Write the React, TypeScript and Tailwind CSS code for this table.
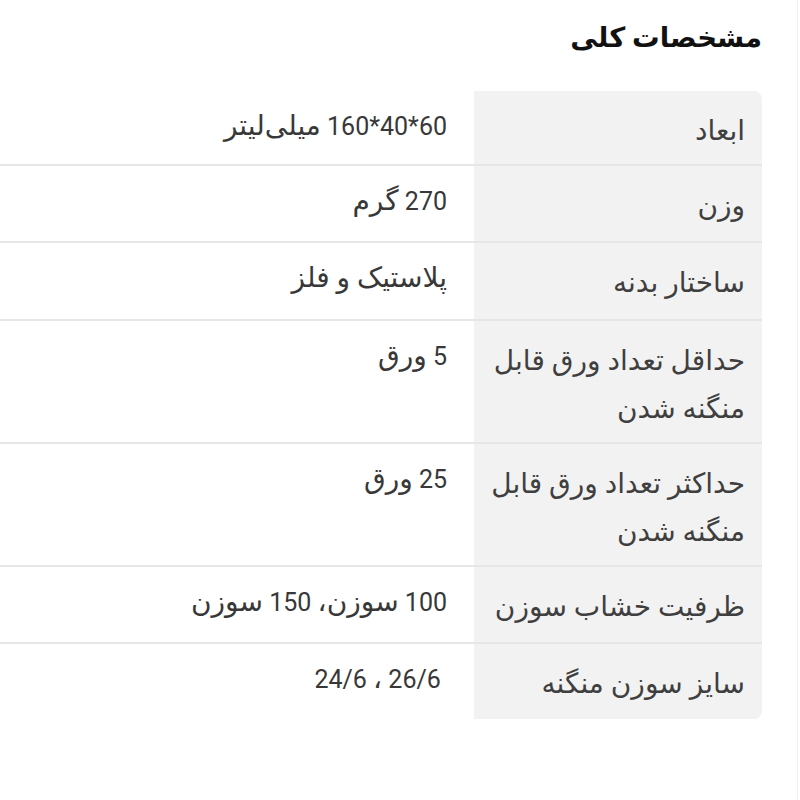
import type { ReactNode } from "react";

const specs: { label: string[]; value: string; pb: string }[] = [
  { label: ["ابعاد"], value: "60*40*160 میلی\u200cلیتر", pb: "pb-[9px]" },
  { label: ["وزن"], value: "270 گرم", pb: "pb-[11px]" },
  { label: ["ساختار بدنه"], value: "پلاستیک و فلز", pb: "pb-[12px]" },
  { label: ["حداقل تعداد ورق قابل", "منگنه شدن"], value: "5 ورق", pb: "pb-[9px]" },
  { label: ["حداکثر تعداد ورق قابل", "منگنه شدن"], value: "25 ورق", pb: "pb-[9px]" },
  { label: ["ظرفیت خشاب سوزن"], value: "100 سوزن، 150 سوزن", pb: "pb-[11px]" },
  { label: ["سایز سوزن منگنه"], value: "\u00a026/6 ، 24/6", pb: "pb-[11px]" },
];

// Persian glyphs fall back to a face that runs small next to Roboto digits,
// so the Persian runs get their own, larger size.
function Mixed({ text }: { text: string }) {
  const parts = text.split(/([\u0600-\u06FF\u200c]+(?: [\u0600-\u06FF\u200c]+)*)/);
  return (
    <>
      {parts.map((p, i) =>
        /[\u0600-\u06FF]/.test(p) ? (
          <span key={i} className="text-[28px]">
            {p}
          </span>
        ) : (
          <span key={i}>{p}</span>
        ),
      )}
    </>
  );
}

function SpecRow({
  label,
  value,
  pb,
  first,
  last,
}: {
  label: string[];
  value: string;
  pb: string;
  first: boolean;
  last: boolean;
}) {
  const lines: ReactNode[] = [];
  label.forEach((l, i) => {
    if (i > 0) lines.push(<br key={`br${i}`} />);
    lines.push(l);
  });
  return (
    <div className={last ? "flex" : "flex border-b-2 border-[#e6e6e6]"}>
      <div
        className={`w-[288px] shrink-0 bg-[#f2f2f2] pt-4 pr-[17px] pl-2 ${pb} text-[28px] leading-[48px] text-[#3f3f3f] ${first ? "rounded-tr-lg" : ""} ${last ? "rounded-br-lg" : ""}`}
      >
        {lines}
      </div>
      <div className="w-[474px] shrink-0 pt-[11px] pr-[27px] text-[25px] leading-[48px] text-[#383838]">
        <Mixed text={value} />
      </div>
    </div>
  );
}

export default function App() {
  return (
    <div
      dir="rtl"
      className="h-[800px] w-[798px] overflow-hidden border-r border-[#f0f0f0] bg-white pr-[35px]"
      style={{ fontFamily: '"Roboto", "DejaVu Sans", sans-serif' }}
    >
      <h1 className="pt-[16px] text-[27.5px] leading-[44px] font-bold text-[#111]">مشخصات کلی</h1>
      <div className="mt-[31px] flex w-[762px] flex-col">
        {specs.map((s, i) => (
          <SpecRow
            key={i}
            label={s.label}
            value={s.value}
            pb={s.pb}
            first={i === 0}
            last={i === specs.length - 1}
          />
        ))}
      </div>
    </div>
  );
}
